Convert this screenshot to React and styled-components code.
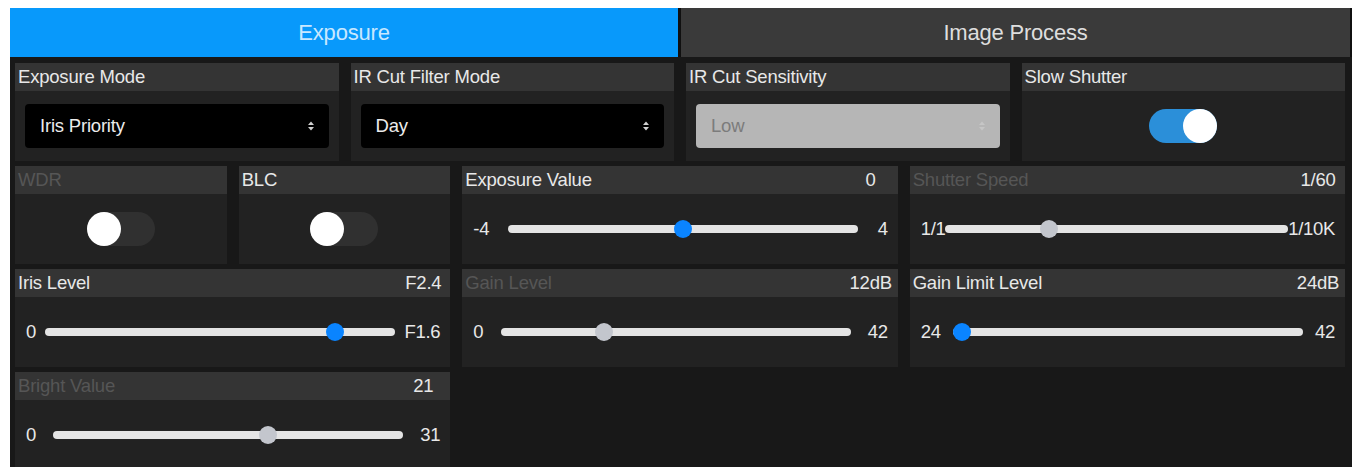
import React from "react";
import styled, { createGlobalStyle } from "styled-components";

const GlobalStyle = createGlobalStyle`
  html, body { margin: 0; padding: 0; overflow: hidden; background: #ffffff; }
  body { font-family: "Liberation Sans", Arial, sans-serif; }
  #root { padding: 8px 10px 0 10px; }
`;

const Panel = styled.div`
  width: 1342px;
  background: #181818;
`;

const TabBar = styled.div`
  display: grid;
  grid-template-columns: 668px 1fr;
  column-gap: 3px;
  height: 49px;
  padding-right: 2px;
  background: #101010;
`;

const Tab = styled.div`
  display: flex;
  align-items: center;
  justify-content: center;
  font-size: 22px;
  letter-spacing: -0.2px;
  background: ${(p) => (p.$active ? "#0899fb" : "#3a3a3a")};
  color: ${(p) => (p.$active ? "#c8e8ff" : "#dedede")};
`;

const Grid = styled.div`
  display: grid;
  grid-template-columns: repeat(12, minmax(0, 1fr));
  grid-auto-rows: 98px;
  gap: 5px 12px;
  padding: 6px 7px 8px 5px;
`;

const Card = styled.section`
  grid-column: span ${(p) => p.$span};
  display: grid;
  grid-template-rows: 28px 1fr;
  background: #222222;
  min-width: 0;
  overflow: hidden;
`;

const CardHeader = styled.header`
  display: flex;
  align-items: center;
  justify-content: space-between;
  background: #343434;
  padding: 0 4px 0 3px;
  font-size: 18.5px;
  letter-spacing: -0.2px;
`;

const Label = styled.span`
  color: ${(p) => (p.$disabled ? "#565656" : "#e8e8e8")};
`;

const HeaderValue = styled.span`
  min-width: 46px;
  text-align: center;
  color: #e8e8e8;
`;

const SelectBody = styled.div`
  display: flex;
  align-items: center;
  padding: 0 10px;
`;

const SelectBox = styled.div`
  flex: 1;
  height: 44px;
  display: flex;
  align-items: center;
  justify-content: space-between;
  padding: 0 14px 0 15px;
  border-radius: 4px;
  font-size: 18.5px;
  letter-spacing: -0.2px;
  background: ${(p) => (p.$disabled ? "#b6b6b6" : "#000000")};
  color: ${(p) => (p.$disabled ? "#7c7c7c" : "#ececec")};
`;

const CenterBody = styled.div`
  display: flex;
  align-items: center;
  justify-content: center;
`;

const SwitchTrack = styled.div`
  position: relative;
  width: 68px;
  height: 34px;
  border-radius: 17px;
  background: ${(p) => (p.$on ? "#2b8fd9" : "#303030")};
`;

const SwitchKnob = styled.div`
  position: absolute;
  top: 0;
  left: ${(p) => (p.$on ? "34px" : "0")};
  width: 34px;
  height: 34px;
  border-radius: 50%;
  background: #ffffff;
`;

const SliderBody = styled.div`
  display: flex;
  align-items: center;
  justify-content: space-between;
  padding: 0 10px 0 11px;
  font-size: 18.5px;
  letter-spacing: -0.3px;
  color: #e8e8e8;
`;

const Track = styled.div`
  position: relative;
  flex: 0 1 350px;
  min-width: 0;
  height: 8px;
  border-radius: 4px;
  background: #e4e4e4;
`;

const Thumb = styled.div`
  position: absolute;
  top: -5px;
  width: 18px;
  height: 18px;
  border-radius: 50%;
  background: ${(p) => (p.$active ? "#0a84ff" : "#c3c6cd")};
`;

const Arrows = ({ color }) => (
  <svg width="8" height="12" viewBox="0 0 8 12">
    <path d="M1 5 L4 1.5 L7 5 Z" fill={color} />
    <path d="M1 7 L4 10.5 L7 7 Z" fill={color} />
  </svg>
);

const SelectCard = ({ label, value, disabled }) => (
  <Card $span={3}>
    <CardHeader>
      <Label>{label}</Label>
    </CardHeader>
    <SelectBody>
      <SelectBox $disabled={disabled}>
        <span>{value}</span>
        <Arrows color={disabled ? "#c6c6c6" : "#d0d0d0"} />
      </SelectBox>
    </SelectBody>
  </Card>
);

const SwitchCard = ({ label, on, disabled, span }) => (
  <Card $span={span}>
    <CardHeader>
      <Label $disabled={disabled}>{label}</Label>
    </CardHeader>
    <CenterBody>
      <SwitchTrack $on={on}>
        <SwitchKnob $on={on} />
      </SwitchTrack>
    </CenterBody>
  </Card>
);

const SliderCard = ({ label, value, min, max, pct, active, disabled }) => (
  <Card $span={4}>
    <CardHeader>
      <Label $disabled={disabled}>{label}</Label>
      <HeaderValue>{value}</HeaderValue>
    </CardHeader>
    <SliderBody>
      <span>{min}</span>
      <Track>
        <Thumb $active={active} style={{ left: `calc(${pct} * (100% - 18px))` }} />
      </Track>
      <span>{max}</span>
    </SliderBody>
  </Card>
);

export default function App() {
  return (
    <>
      <GlobalStyle />
      <Panel>
        <TabBar>
          <Tab $active>Exposure</Tab>
          <Tab>Image Process</Tab>
        </TabBar>
        <Grid>
          <SelectCard label="Exposure Mode" value="Iris Priority" />
          <SelectCard label="IR Cut Filter Mode" value="Day" />
          <SelectCard label="IR Cut Sensitivity" value="Low" disabled />
          <SwitchCard label="Slow Shutter" on span={3} />

          <SwitchCard label="WDR" disabled span={2} />
          <SwitchCard label="BLC" span={2} />
          <SliderCard label="Exposure Value" value="0" min="-4" max="4" pct={0.5} active />
          <SliderCard label="Shutter Speed" value="1/60" min="1/1" max="1/10K" pct={0.29} disabled />

          <SliderCard label="Iris Level" value="F2.4" min="0" max="F1.6" pct={0.846} active />
          <SliderCard label="Gain Level" value="12dB" min="0" max="42" pct={0.286} disabled />
          <SliderCard label="Gain Limit Level" value="24dB" min="24" max="42" pct={0} active />

          <SliderCard label="Bright Value" value="21" min="0" max="31" pct={0.62} disabled />
        </Grid>
      </Panel>
    </>
  );
}
